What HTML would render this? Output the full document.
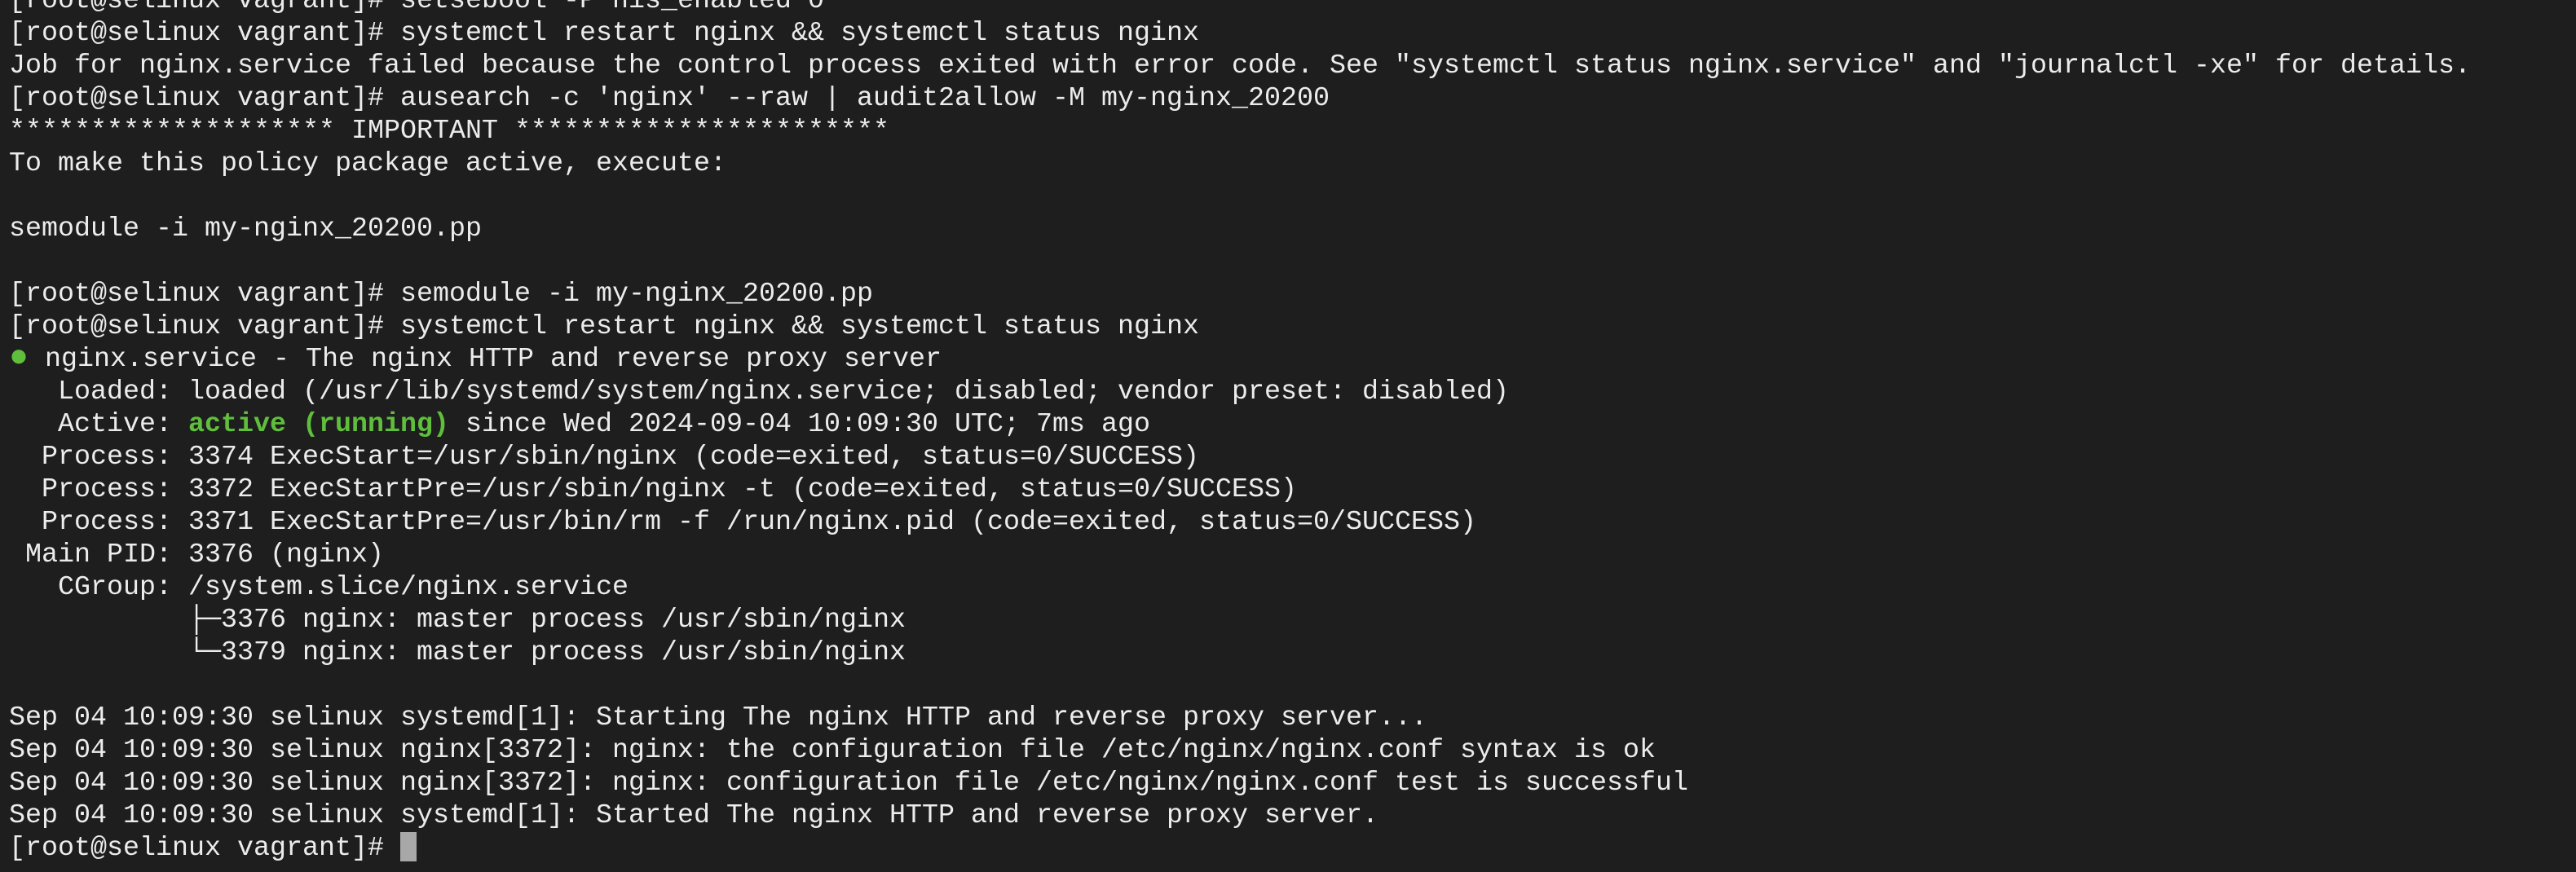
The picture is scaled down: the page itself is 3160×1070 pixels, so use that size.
<!DOCTYPE html>
<html><head><meta charset="utf-8"><style>
html,body{margin:0;padding:0;background:#1e1e1e;width:3160px;height:1070px;overflow:hidden}
pre{margin:0;position:absolute;left:11px;top:-19px;font-family:"Liberation Mono","DejaVu Sans Mono",monospace;font-size:33.33px;line-height:40px;color:#ececec;white-space:pre}
.g{color:#5fbf3c;font-weight:bold}
.b{color:#5fbf3c;font-size:40px;line-height:30px}
.c{display:inline-block;width:20px;height:36px;background:#a8a8a8;vertical-align:-8px}
</style></head><body><pre>[root@selinux vagrant]# setsebool -P nis_enabled 0
[root@selinux vagrant]# systemctl restart nginx &amp;&amp; systemctl status nginx
Job for nginx.service failed because the control process exited with error code. See "systemctl status nginx.service" and "journalctl -xe" for details.
[root@selinux vagrant]# ausearch -c 'nginx' --raw | audit2allow -M my-nginx_20200
******************** IMPORTANT ***********************
To make this policy package active, execute:

semodule -i my-nginx_20200.pp

[root@selinux vagrant]# semodule -i my-nginx_20200.pp
[root@selinux vagrant]# systemctl restart nginx &amp;&amp; systemctl status nginx
<span class="b">●</span> nginx.service - The nginx HTTP and reverse proxy server
   Loaded: loaded (/usr/lib/systemd/system/nginx.service; disabled; vendor preset: disabled)
   Active: <span class="g">active (running)</span> since Wed 2024-09-04 10:09:30 UTC; 7ms ago
  Process: 3374 ExecStart=/usr/sbin/nginx (code=exited, status=0/SUCCESS)
  Process: 3372 ExecStartPre=/usr/sbin/nginx -t (code=exited, status=0/SUCCESS)
  Process: 3371 ExecStartPre=/usr/bin/rm -f /run/nginx.pid (code=exited, status=0/SUCCESS)
 Main PID: 3376 (nginx)
   CGroup: /system.slice/nginx.service
           ├─3376 nginx: master process /usr/sbin/nginx
           └─3379 nginx: master process /usr/sbin/nginx

Sep 04 10:09:30 selinux systemd[1]: Starting The nginx HTTP and reverse proxy server...
Sep 04 10:09:30 selinux nginx[3372]: nginx: the configuration file /etc/nginx/nginx.conf syntax is ok
Sep 04 10:09:30 selinux nginx[3372]: nginx: configuration file /etc/nginx/nginx.conf test is successful
Sep 04 10:09:30 selinux systemd[1]: Started The nginx HTTP and reverse proxy server.
[root@selinux vagrant]# <span class="c"></span></pre></body></html>
